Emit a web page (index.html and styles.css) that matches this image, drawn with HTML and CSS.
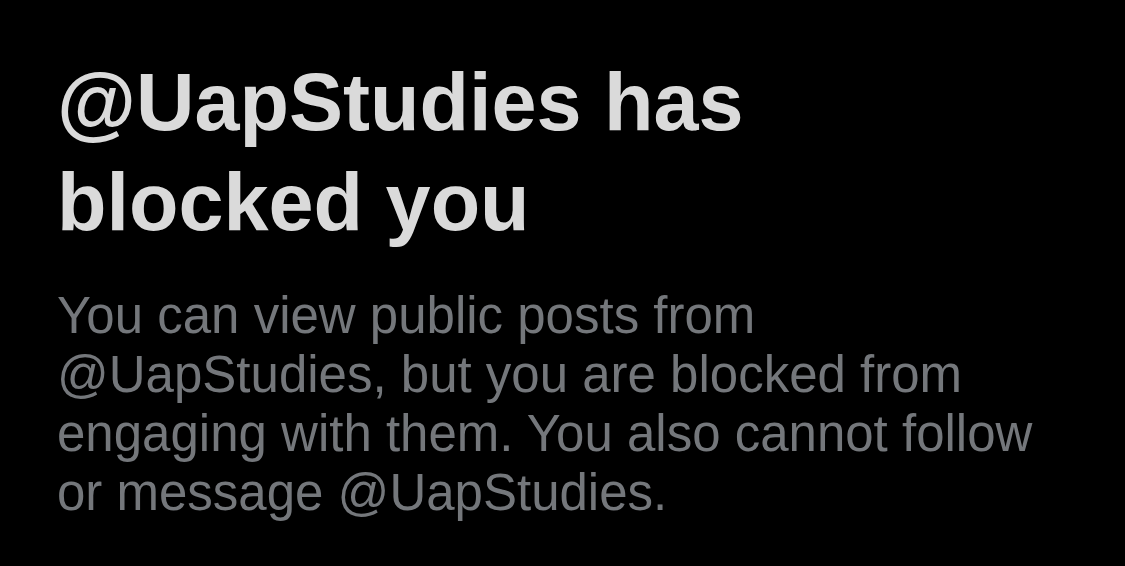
FILE: index.html
```html
<!DOCTYPE html>
<html lang="en">
<head>
<meta charset="utf-8">
<title>Blocked</title>
<link rel="stylesheet" href="styles.css">
</head>
<body>
<main class="notice">
  <h1 class="notice-title">@UapStudies has blocked you</h1>
  <p class="notice-text">You can view public posts from @UapStudies, but you are blocked from engaging with them. You also cannot follow or message @UapStudies.</p>
</main>
</body>
</html>
```
FILE: styles.css
```css
html, body {
  margin: 0;
  padding: 0;
  background: #000000;
}
body {
  width: 1125px;
  height: 566px;
  overflow: hidden;
  font-family: "Liberation Sans", Arial, sans-serif;
}
.notice {
  display: flex;
  flex-direction: column;
  gap: 34px;
  padding: 52px 0 0 57px;
  width: 1000px;
}
.notice-title {
  margin: 0;
  max-width: 900px;
  font-size: 81px;
  line-height: 100px;
  font-weight: 700;
  color: #dadada;
}
.notice-text {
  margin: 0;
  font-size: 51px;
  line-height: 59px;
  font-weight: 400;
  color: #74777b;
}
```
